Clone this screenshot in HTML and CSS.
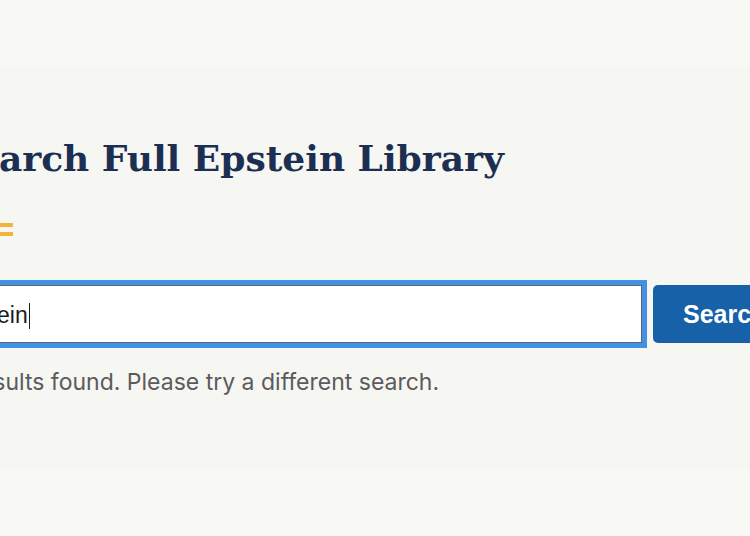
FILE: index.html
```html
<!DOCTYPE html>
<html lang="en">
<head>
<meta charset="utf-8">
<title>Search Full Epstein Library</title>
<link rel="stylesheet" href="styles.css">
</head>
<body>
<main class="panel">
  <div class="content">
    <h1 class="title">Search Full Epstein Library</h1>
    <div class="accent"><span></span><span></span></div>
    <form class="search-row">
      <div class="field"><span class="value">Epstein</span><span class="caret"></span></div>
      <button type="button" class="btn">Search</button>
    </form>
    <p class="message">No results found. Please try a different search.</p>
  </div>
</main>
</body>
</html>
```
FILE: styles.css
```css
html, body {
  margin: 0;
  padding: 0;
  background: #f8f8f4;
  overflow: hidden;
}
body {
  width: 750px;
  height: 536px;
}
.panel {
  margin-top: 67px;
  height: 401px;
  background: #f6f6f2;
  overflow: hidden;
}
.content {
  margin-left: -52px;
  padding-top: 67px;
  width: 960px;
}
.title {
  margin: 0 0 0 2px;
  font-family: "DejaVu Serif", "Liberation Serif", serif;
  font-weight: 700;
  font-size: 36px;
  line-height: 48px;
  color: #1c2f52;
}
.accent {
  margin-top: 41px;
  display: flex;
  flex-direction: column;
  gap: 5px;
}
.accent span {
  display: block;
  width: 65px;
  height: 4px;
  background: #f2b43a;
}
.search-row {
  margin: 44px 0 0;
  display: flex;
  align-items: center;
  gap: 6px;
}
.field {
  box-sizing: border-box;
  width: 699px;
  height: 68px;
  border: 5px solid #4191e6;
  outline: 1px solid #5d6672;
  outline-offset: -6px;
  background: #fff;
  display: flex;
  align-items: center;
  padding-top: 3px;
  font-family: "Liberation Sans", Arial, sans-serif;
  font-size: 23px;
  color: #1b1b1b;
}
.value {
  margin-left: -2px;
}
.caret {
  display: inline-block;
  width: 1px;
  height: 26px;
  margin-left: 1px;
  background: #1b1b1b;
}
.btn {
  box-sizing: border-box;
  width: 140px;
  height: 58px;
  border: 0;
  border-radius: 5px;
  background: #1661a8;
  color: #fff;
  font-family: "Liberation Sans", Arial, sans-serif;
  font-weight: 700;
  font-size: 25px;
  text-align: left;
  padding: 0 0 0 30px;
}
.message {
  margin: 20px 0 0 -14px;
  font-family: "Inter", "Noto Sans", sans-serif;
  font-size: 23px;
  line-height: 28px;
  color: #5b5b5b;
}
```
